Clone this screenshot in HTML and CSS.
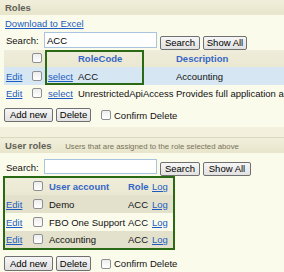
FILE: index.html
```html
<!DOCTYPE html>
<html lang="en">
<head>
  <meta charset="UTF-8" />
  <title>Roles</title>
  <link rel="stylesheet" href="styles.css">
</head>
<body>

  <!-- Roles -->
  <div class="panel roles">
    <div class="panel-head">
      <span class="title">Roles</span>
    </div>
    <div class="panel-body">
      <a class="excel" href="#">Download to Excel</a>

      <div class="search-row">
        <label>Search:</label>
        <input class="search-box" type="text" value="ACC">
        <button class="btn btn-search">Search</button>
        <button class="btn btn-all">Show All</button>
      </div>

      <div class="grid-wrap">
        <table class="grid roles-grid">
          <colgroup>
            <col style="width:24px"><col style="width:18px"><col style="width:30px"><col style="width:98px"><col>
          </colgroup>
          <thead>
            <tr>
              <th></th>
              <th class="cb"><input type="checkbox"></th>
              <th></th>
              <th>RoleCode</th>
              <th>Description</th>
            </tr>
          </thead>
          <tbody>
            <tr class="selected">
              <td><a href="#">Edit</a></td>
              <td class="cb"><input type="checkbox"></td>
              <td><a href="#">select</a></td>
              <td>ACC</td>
              <td>Accounting</td>
            </tr>
            <tr>
              <td><a href="#">Edit</a></td>
              <td class="cb"><input type="checkbox"></td>
              <td><a href="#">select</a></td>
              <td>UnrestrictedApiAccess</td>
              <td>Provides full application access to all modules</td>
            </tr>
          </tbody>
        </table>
        <div class="highlight"></div>
      </div>

      <div class="actions">
        <button class="btn btn-add">Add new</button>
        <button class="btn btn-del">Delete</button>
        <input class="confirm" type="checkbox">
        <span>Confirm Delete</span>
      </div>
    </div>
  </div>

  <!-- User roles -->
  <div class="panel user-roles">
    <div class="panel-head">
      <span class="title">User roles</span>
      <span class="hint">Users that are assigned to the role selected above</span>
    </div>
    <div class="panel-body">
      <div class="search-row short">
        <label>Search:</label>
        <input class="search-box" type="text">
        <button class="btn btn-search">Search</button>
        <button class="btn btn-all wide">Show All</button>
      </div>

      <div class="user-wrap">
        <table class="grid user-grid">
          <colgroup>
            <col style="width:23px"><col style="width:19px"><col style="width:79px"><col style="width:24px"><col style="width:23px">
          </colgroup>
          <thead>
            <tr>
              <th></th>
              <th class="cb"><input type="checkbox"></th>
              <th>User account</th>
              <th>Role</th>
              <th><a href="#">Log</a></th>
            </tr>
          </thead>
          <tbody>
            <tr class="alt">
              <td><a href="#">Edit</a></td>
              <td class="cb"><input type="checkbox"></td>
              <td>Demo</td>
              <td>ACC</td>
              <td><a href="#">Log</a></td>
            </tr>
            <tr>
              <td><a href="#">Edit</a></td>
              <td class="cb"><input type="checkbox"></td>
              <td>FBO One Support</td>
              <td>ACC</td>
              <td><a href="#">Log</a></td>
            </tr>
            <tr class="alt last">
              <td><a href="#">Edit</a></td>
              <td class="cb"><input type="checkbox"></td>
              <td>Accounting</td>
              <td>ACC</td>
              <td><a href="#">Log</a></td>
            </tr>
          </tbody>
        </table>
      </div>

      <div class="actions">
        <button class="btn btn-add">Add new</button>
        <button class="btn btn-del">Delete</button>
        <input class="confirm" type="checkbox">
        <span>Confirm Delete</span>
      </div>
    </div>
  </div>

</body>
</html>
```

FILE: styles.css
```css
* { box-sizing: border-box; margin: 0; padding: 0; }

html, body {
  overflow: hidden;
}

body {
  font-family: 'Liberation Sans', Arial, sans-serif;
  font-size: 9.5px;
  color: #111;
  background-color: #f3f1dd;
  width: 460px;
}

a {
  color: #1c5cc0;
  text-decoration: underline;
}

/* Panels */
.panel {
  background-color: #fbfbec;
}

.user-roles {
  margin-top: 10px;
  border-top: 1px solid #dcd9bd;
}

.panel-head {
  height: 15px;
  line-height: 15px;
  padding-left: 5px;
  background: linear-gradient(#f1efdb, #e8e5cc);
  white-space: nowrap;
}

.panel-head .title {
  font-weight: bold;
  color: #616157;
}

.panel-head .hint {
  font-size: 7.8px;
  color: #77735a;
  margin-left: 11px;
}

.panel-body {
  padding: 0 4px 5px 4px;
}

.excel {
  display: block;
  width: max-content;
  height: 13px;
  line-height: 13px;
  margin: 2px 0 0 1px;
}

/* Search */
.search-row {
  display: flex;
  align-items: flex-start;
  height: 19px;
  margin-top: 1px;
}

.search-row label {
  width: 40px;
  padding-left: 2px;
  margin-top: 4px;
}

.search-box {
  width: 113px;
  height: 16px;
  margin-top: 1px;
  border: 1px solid #a9c4e0;
  background: white;
  font: inherit;
  padding-left: 2px;
  outline: none;
}

.search-row.short {
  height: 18px;
  margin-top: 5px;
}

.search-row.short .search-box {
  height: 15px;
}

.search-row.short .btn {
  margin-top: 4px;
}

.btn {
  height: 14px;
  font: inherit;
  color: #000;
  border: 1px solid #707070;
  border-radius: 2px;
  background: linear-gradient(#f6f6f6, #e1e1e1);
  padding: 0;
  line-height: 12px;
}

.search-row .btn { margin-top: 5px; }
.btn-search { width: 40px; margin-left: 3px; }
.btn-all { width: 44px; margin-left: 3px; }
.btn-all.wide { width: 48px; }

/* Grids */
.grid-wrap {
  position: relative;
}

.grid {
  border-collapse: collapse;
  table-layout: fixed;
  white-space: nowrap;
}

.roles-grid { width: 452px; }

.grid th, .grid td {
  padding: 0 2px;
  text-align: left;
  overflow: hidden;
}

.grid th {
  font-weight: bold;
  color: #3566c6;
  background: linear-gradient(#efeddb, #eae8d1);
  height: 17px;
}

.grid td { height: 17px; }

.roles-grid tbody tr:first-child td { height: 18px; }

.grid .cb { text-align: center; padding: 0; }

.selected td { background-color: #d6e7f3; }

.highlight {
  position: absolute;
  left: 41px;
  top: 0;
  width: 99px;
  height: 35px;
  border: 2px solid #2b6a15;
}

input[type="checkbox"] {
  appearance: none;
  width: 10px;
  height: 10px;
  border: 1px solid #8d8f90;
  border-radius: 2px;
  background: linear-gradient(#ededed, #ffffff);
  vertical-align: middle;
  margin-top: -2px;
}

/* User roles grid */
.user-wrap {
  display: inline-block;
  margin-left: -1px;
  border: 2px solid #2b6a15;
}

.user-grid { width: 168px; }

.user-grid th:first-child, .user-grid td:first-child { padding-left: 1px; }

.user-grid th { height: 17px; }
.user-grid td { height: 18px; }
.user-grid tr.last td { height: 17px; }

.user-grid th a { font-weight: normal; }

.alt td { background-color: #e3e1cc; }

/* Actions */
.actions {
  display: flex;
  align-items: center;
  margin-top: 6px;
  height: 14px;
}

.user-roles .actions {
  margin-top: 4px;
  height: 15px;
}

.user-roles .actions .btn { height: 15px; }

.btn-add { width: 49px; }
.btn-del { width: 35px; margin-left: 3px; }

.actions .confirm {
  margin: 0 3px 0 10px;
}
```
